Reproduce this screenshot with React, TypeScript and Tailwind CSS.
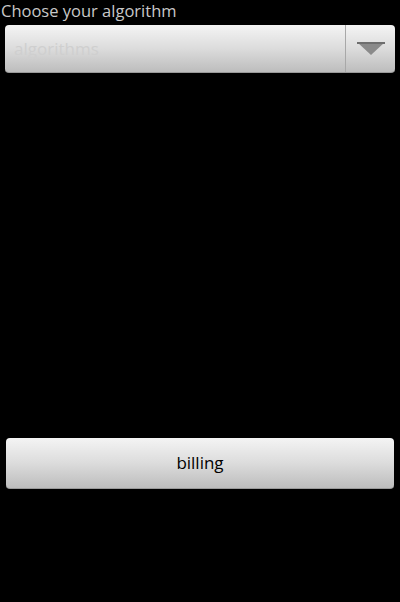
export default function App() {
  return (
    <div className="w-[400px] h-[602px] bg-black flex flex-col font-['Open_Sans',sans-serif]">
      <div className="text-[#c8c8c8] text-[16.5px] leading-[24px] pl-[1px] -mt-[1px]">Choose your algorithm</div>
      <div className="mx-[5px] mt-[2px] h-[48px] rounded-[4px] bg-gradient-to-b from-[#f4f4f4] via-[#dcdcdc] to-[#bdbdbd] flex items-stretch border-b border-[#9a9a9a]">
        <div className="flex-1 flex items-center pl-[9px] text-[17px] text-[#cfcfcf]">algorithms</div>
        <div className="w-px bg-[#a8a8a8]" />
        <div className="w-[49px] flex items-center justify-center">
          <svg width="28" height="13" viewBox="0 0 28 13">
            <polygon points="0,0 28,0 14,13" fill="#8a8a8a" />
            <rect x="0" y="0" width="28" height="2" fill="#6e6e6e" />
          </svg>
        </div>
      </div>
      <div className="flex-1" />
      <button className="mx-[6px] h-[51px] rounded-[4px] bg-gradient-to-b from-[#f4f4f4] via-[#dcdcdc] to-[#bdbdbd] border-b border-[#9a9a9a] text-[17px] text-black mb-[113px]">
        billing
      </button>
    </div>
  )
}
